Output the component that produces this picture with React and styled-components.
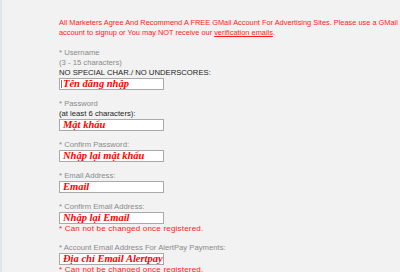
import styled, { createGlobalStyle } from 'styled-components';

const GlobalStyle = createGlobalStyle`
	html, body {
		margin: 0;
		padding: 0;
		background: #f2f2f2;
	}
	body {
		font-family: "Liberation Sans", Arial, sans-serif;
	}
`;

const fields = [
	{
		label: 'Username',
		hints: [
			{ text: '(3 - 15 characters)', dark: false },
			{ text: 'NO SPECIAL CHAR./ NO UNDERSCORES:', dark: true },
		],
		value: 'Tên đăng nhập',
		caret: true,
	},
	{
		label: 'Password',
		hints: [{ text: '(at least 6 characters):', dark: true }],
		value: 'Mật khẩu',
	},
	{ label: 'Confirm Password:', value: 'Nhập lại mật khẩu' },
	{ label: 'Email Address:', value: 'Email' },
	{
		label: 'Confirm Email Address:',
		value: 'Nhập lại Email',
		note: '* Can not be changed once registered.',
	},
	{
		label: 'Account Email Address For AlertPay Payments:',
		value: 'Địa chỉ Email Alertpay',
		note: '* Can not be changed once registered.',
	},
];

const Page = styled.div`
	box-sizing: border-box;
	width: 400px;
	height: 272px;
	overflow: hidden;
	border-left: 2px solid #dfe5ee;
	padding: 18px 0 0 57px;
`;

const Notice = styled.p`
	margin: 0 0 10px;
	font-size: 7.4px;
	line-height: 10px;
	color: #ff1a1a;
	white-space: nowrap;

	a {
		color: inherit;
		text-decoration: underline;
	}
`;

const Group = styled.div`
	display: flex;
	flex-direction: column;
	align-items: flex-start;
	margin-bottom: 9px;
`;

const Line = styled.div`
	font-size: 7.7px;
	line-height: 10px;
	white-space: nowrap;
	color: ${p => (p.$dark ? '#222' : '#8a8a8a')};
`;

const Box = styled.div`
	box-sizing: border-box;
	position: relative;
	width: 105px;
	height: 12px;
	background: #fff;
	border: 1px solid #a9a9a9;
	padding-left: 3px;
	display: flex;
	align-items: center;
	overflow: hidden;
`;

const Value = styled.span`
	font-family: "Liberation Serif", "Times New Roman", serif;
	font-weight: bold;
	font-style: italic;
	font-size: 10.5px;
	line-height: 10px;
	color: #f00;
	white-space: nowrap;
`;

const Caret = styled.span`
	position: absolute;
	left: 1px;
	top: 1px;
	bottom: 1px;
	width: 1px;
	background: #777;
`;

const Note = styled.div`
	font-size: 8px;
	line-height: 10px;
	letter-spacing: 0.2px;
	color: #ff1a1a;
	white-space: nowrap;
`;

function App() {
	return (
		<>
			<GlobalStyle />
			<Page>
				<Notice>
					All Marketers Agree And Recommend A FREE GMail Account For Advertising Sites. Please use a GMail
					<br />
					account to signup or You may NOT receive our <a href='#'>verification emails</a>.
				</Notice>
				{fields.map(f => (
					<Group key={f.label}>
						<Line>* {f.label}</Line>
						{f.hints && f.hints.map(h => (
							<Line key={h.text} $dark={h.dark}>{h.text}</Line>
						))}
						<Box>
							{f.caret && <Caret />}
							<Value>{f.value}</Value>
						</Box>
						{f.note && <Note>{f.note}</Note>}
					</Group>
				))}
			</Page>
		</>
	);
}

export default App;
